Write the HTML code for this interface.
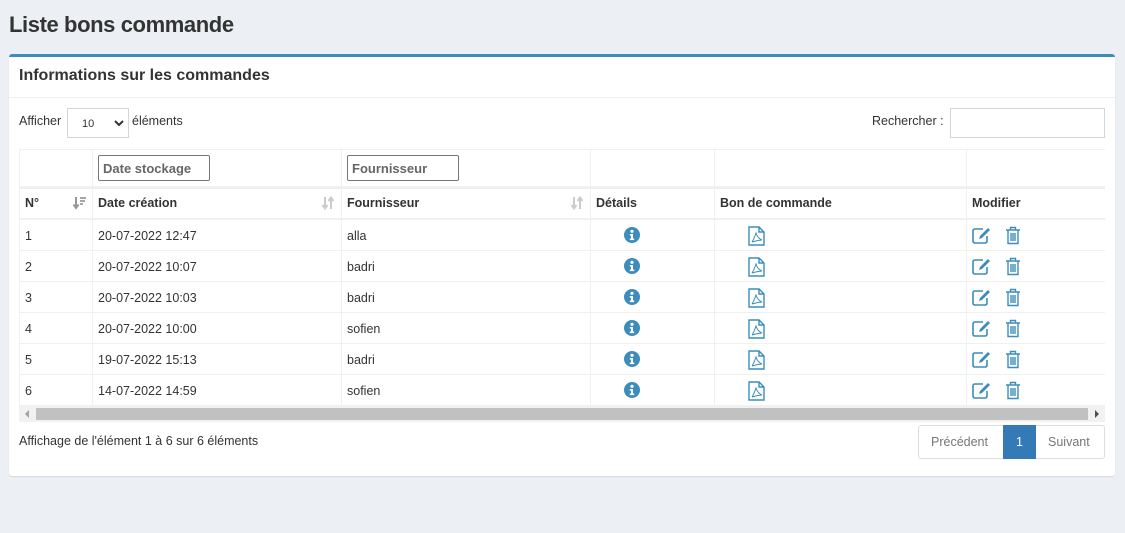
<!DOCTYPE html>
<html><head><meta charset="utf-8"><style>
*{box-sizing:border-box;margin:0;padding:0}
body{width:1125px;height:533px;background:#ecf0f5;font-family:"Liberation Sans",sans-serif;color:#333;position:relative;overflow:hidden;font-size:12.5px}
.a{position:absolute}
h1{position:absolute;left:9px;top:12px;font-size:22px;font-weight:bold;letter-spacing:-0.4px;color:#333}
.card{position:absolute;left:9px;top:54px;width:1106px;height:422px;background:#fff;border-top:3px solid #3c8dbc;border-radius:3px;box-shadow:0 1px 1px rgba(0,0,0,.1)}
.hd{position:absolute;left:0;top:0;width:100%;height:41px;border-bottom:1px solid #f0f0f0}
.hd span{position:absolute;left:10px;top:10px;font-size:16px;font-weight:bold;color:#333}
.vl{position:absolute;width:1px;background:#f0f0f0}
.hl{position:absolute;left:19px;width:1086px;height:1px;background:#f0f0f0}
.th{font-weight:bold}
.inp{position:absolute;height:26px;border:1px solid #777;border-radius:2px;font-size:13px;font-weight:bold;color:#666;padding:5px 4px}
</style></head><body>
<h1>Liste bons commande</h1>
<div class="card"><div class="hd"><span>Informations sur les commandes</span></div></div>
<div class="a" style="left:19px;top:114px">Afficher</div>
<div class="a" style="left:67px;top:108px;width:62px;height:30px;border:1px solid #d2d6de;font-size:11px;padding:9px 0 0 14px">10<svg style="position:absolute;right:4px;top:11px" width="10" height="7" viewBox="0 0 10 7"><path d="M1 1l4 4 4-4" fill="none" stroke="#333" stroke-width="2"/></svg></div>
<div class="a" style="left:132px;top:114px">éléments</div>
<div class="a" style="left:872px;top:114px">Rechercher :</div>
<div class="a" style="left:950px;top:108px;width:155px;height:30px;border:1px solid #d2d6de"></div>
<div class="hl" style="top:149px"></div>
<div class="hl" style="top:186px;height:3px"></div>
<div class="hl" style="top:218px;height:2px"></div>
<div class="hl" style="top:250px"></div>
<div class="hl" style="top:281px"></div>
<div class="hl" style="top:312px"></div>
<div class="hl" style="top:343px"></div>
<div class="hl" style="top:374px"></div>
<div class="vl" style="left:19px;top:149px;height:256px"></div>
<div class="vl" style="left:92px;top:149px;height:256px"></div>
<div class="vl" style="left:341px;top:149px;height:256px"></div>
<div class="vl" style="left:590px;top:149px;height:256px"></div>
<div class="vl" style="left:714px;top:149px;height:256px"></div>
<div class="vl" style="left:966px;top:149px;height:256px"></div>
<div class="inp" style="left:98px;top:155px;width:112px">Date stockage</div>
<div class="inp" style="left:347px;top:155px;width:112px">Fournisseur</div>
<div class="a th" style="left:25px;top:196px">N°</div>
<svg class="a" style="left:73px;top:196px" width="14" height="14" viewBox="0 0 14 14"><path d="M3 1v10M0.5 8.5L3 12l2.5-3.5" fill="none" stroke="#999" stroke-width="2"/><path d="M7 2h6M7 5h5M7 8h3" stroke="#999" stroke-width="1.8"/></svg>
<svg class="a" style="left:321px;top:196px" width="14" height="14" viewBox="0 0 14 14"><path d="M4 1v11M1.5 9L4 12.5 6.5 9M10 13V2M7.5 5L10 1.5 12.5 5" fill="none" stroke="#ccc" stroke-width="2"/></svg>
<div class="a th" style="left:98px;top:196px">Date création</div>
<svg class="a" style="left:570px;top:196px" width="14" height="14" viewBox="0 0 14 14"><path d="M4 1v11M1.5 9L4 12.5 6.5 9M10 13V2M7.5 5L10 1.5 12.5 5" fill="none" stroke="#ccc" stroke-width="2"/></svg>
<div class="a th" style="left:347px;top:196px">Fournisseur</div>
<div class="a th" style="left:596px;top:196px">Détails</div>
<div class="a th" style="left:720px;top:196px">Bon de commande</div>
<div class="a th" style="left:972px;top:196px">Modifier</div>
<div id="rows"></div>
<div class="a" style="left:19px;top:405px;width:1086px;height:17px;background:#f1f1f1"></div>
<div class="a" style="left:36px;top:408px;width:1052px;height:12px;background:#c1c1c1"></div>
<div class="a" style="left:25px;top:410px;width:0;height:0;border-top:4px solid transparent;border-bottom:4px solid transparent;border-right:4px solid #a3a3a3"></div>
<div class="a" style="left:1095px;top:410px;width:0;height:0;border-top:4px solid transparent;border-bottom:4px solid transparent;border-left:4px solid #505050"></div>
<div class="a" style="left:19px;top:434px">Affichage de l'élément 1 à 6 sur 6 éléments</div>
<div class="a" style="left:918px;top:425px;width:187px;height:34px;border:1px solid #ddd;border-radius:3px"></div>
<div class="a" style="left:931px;top:435px;color:#777">Précédent</div>
<div class="a" style="left:1003px;top:425px;width:33px;height:34px;background:#337ab7;color:#fff;text-align:center;padding-top:10px">1</div>
<div class="a" style="left:1048px;top:435px;color:#777">Suivant</div>
<script>
var d=[["1","20-07-2022 12:47","alla"],["2","20-07-2022 10:07","badri"],["3","20-07-2022 10:03","badri"],["4","20-07-2022 10:00","sofien"],["5","19-07-2022 15:13","badri"],["6","14-07-2022 14:59","sofien"]];
var h="";
d.forEach(function(r,i){var y=219+31*i;
h+='<div class="a" style="left:25px;top:'+(y+10)+'px">'+r[0]+'</div><div class="a" style="left:98px;top:'+(y+10)+'px">'+r[1]+'</div><div class="a" style="left:347px;top:'+(y+10)+'px">'+r[2]+'</div>';
h+='<svg class="a" style="left:624px;top:'+(y+8)+'px" width="16" height="16" viewBox="0 0 16 16"><circle cx="8" cy="8" r="8" fill="#3c8dbc"/><circle cx="8" cy="4.3" r="1.6" fill="#fff"/><path d="M5.8 7h3.2v4.5h1.2v1.6H5.8v-1.6h1.2V8.6H5.8z" fill="#fff"/></svg>';
h+='<svg class="a" style="left:748px;top:'+(y+7)+'px" width="18" height="20" viewBox="0 0 18 20"><path d="M1 1h10l5 5v13H1z M11 1v5h5" fill="none" stroke="#3c8dbc" stroke-width="1.4"/><path d="M4 16c2-3 3-6 4-9 1 3 3 6 6 7-3 0-6 1-10 2" fill="none" stroke="#3c8dbc" stroke-width="1"/></svg>';
h+='<svg class="a" style="left:972px;top:'+(y+8)+'px" width="20" height="18" viewBox="0 0 20 18"><path d="M11 2H3Q1 2 1 4v10q0 2 2 2h10q2 0 2-2V9" fill="none" stroke="#3c8dbc" stroke-width="1.6"/><path d="M7 12l1-3 8-8 2 2-8 8z" fill="#3c8dbc"/></svg>';
h+='<svg class="a" style="left:1005px;top:'+(y+7)+'px" width="16" height="19" viewBox="0 0 16 19"><path d="M1 4h14M5.5 4V1.5h5V4M3 4v13.5h10V4M6 7v8M8 7v8M10 7v8" fill="none" stroke="#3c8dbc" stroke-width="1.4"/></svg>';
});
document.getElementById("rows").innerHTML=h;
</script>
</body></html>
